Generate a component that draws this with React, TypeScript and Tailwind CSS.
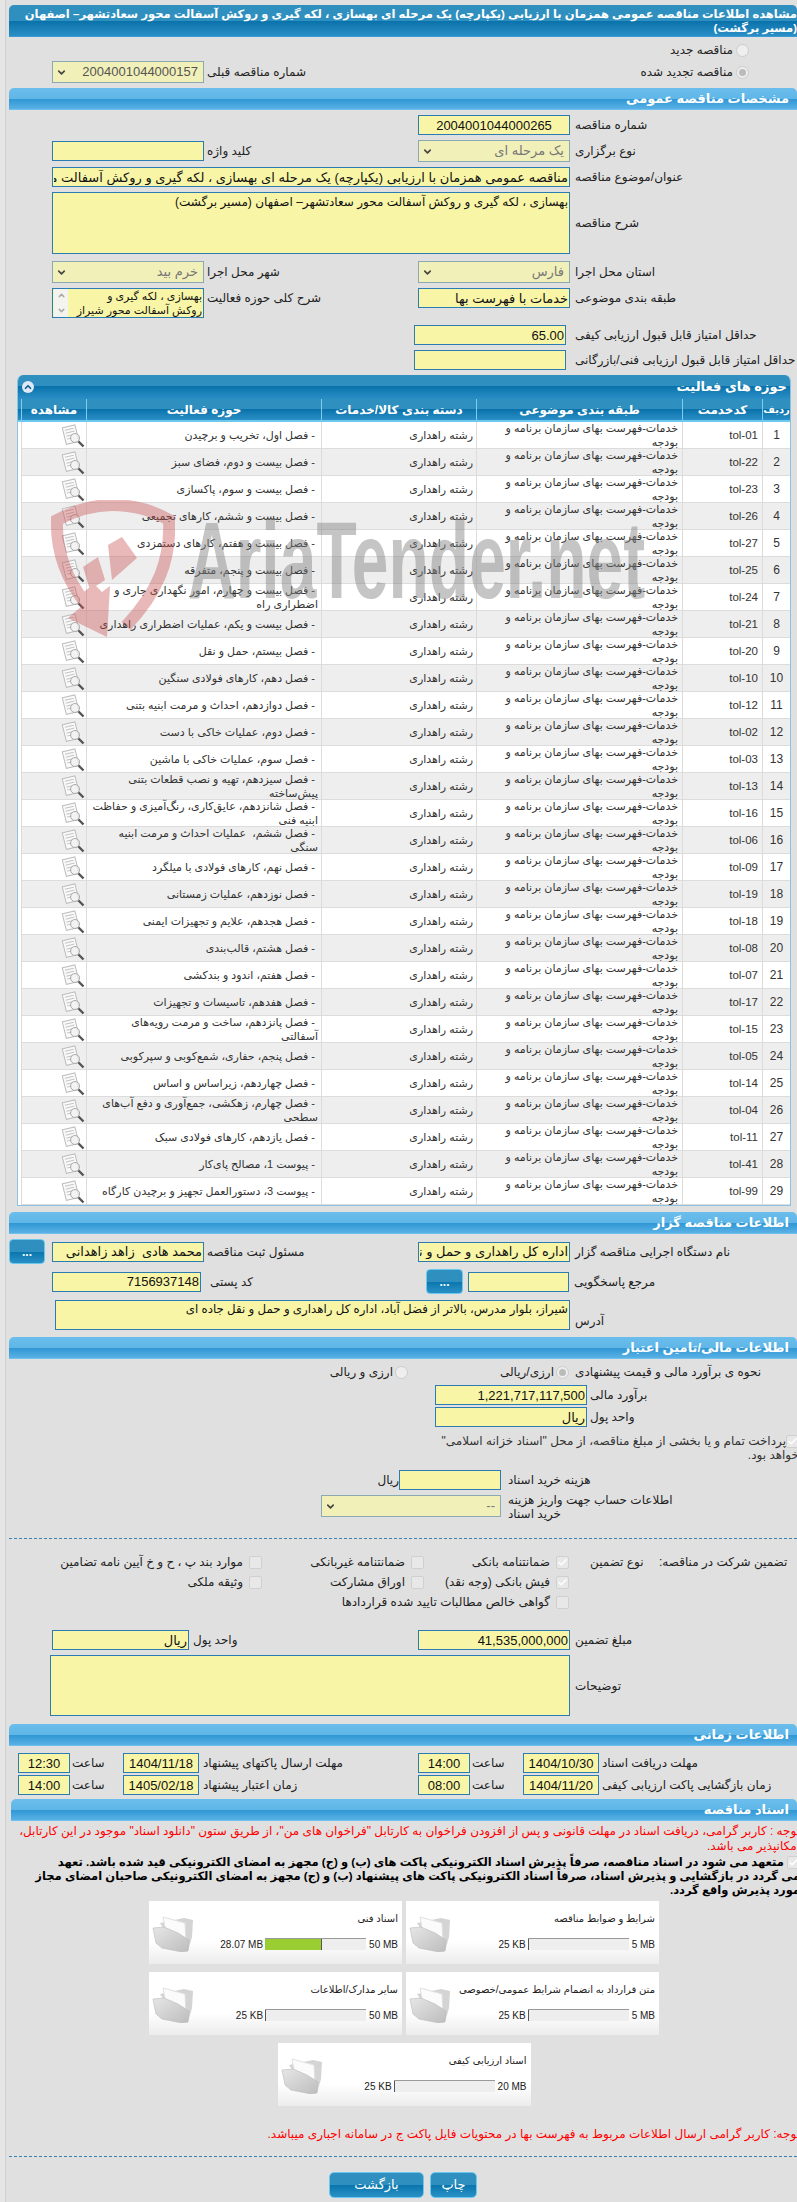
import React from 'react';
import { ChevronDown, ChevronUp, Check } from 'lucide-react';

const rows: [string, string][] = [
  ['tol-01', 'فصل اول، تخریب و برچیدن'],
  ['tol-22', 'فصل بیست و دوم، فضای سبز'],
  ['tol-23', 'فصل بیست و سوم، پاکسازی'],
  ['tol-26', 'فصل بیست و ششم، کارهای تجمیعی'],
  ['tol-27', 'فصل بیست و هفتم، کارهای دستمزدی'],
  ['tol-25', 'فصل بیست و پنجم، متفرقه'],
  ['tol-24', 'فصل بیست و چهارم، امور نگهداری جاری و\nاضطراری راه'],
  ['tol-21', 'فصل بیست و یکم، عملیات اضطراری راهداری'],
  ['tol-20', 'فصل بیستم، حمل و نقل'],
  ['tol-10', 'فصل دهم، کارهای فولادی سنگین'],
  ['tol-12', 'فصل دوازدهم، احداث و مرمت ابنیه بتنی'],
  ['tol-02', 'فصل دوم، عملیات خاکی با دست'],
  ['tol-03', 'فصل سوم، عملیات خاکی با ماشین'],
  ['tol-13', 'فصل سیزدهم، تهیه و نصب قطعات بتنی\nپیش‌ساخته'],
  ['tol-16', 'فصل شانزدهم، عایق‌کاری، رنگ‌آمیزی و حفاظت\nابنیه فنی'],
  ['tol-06', 'فصل ششم،  عملیات احداث و مرمت ابنیه\nسنگی'],
  ['tol-09', 'فصل نهم، کارهای فولادی با میلگرد'],
  ['tol-19', 'فصل نوزدهم، عملیات زمستانی'],
  ['tol-18', 'فصل هجدهم، علایم و تجهیزات ایمنی'],
  ['tol-08', 'فصل هشتم، قالب‌بندی'],
  ['tol-07', 'فصل هفتم، اندود و بندکشی'],
  ['tol-17', 'فصل هفدهم، تاسیسات و تجهیزات'],
  ['tol-15', 'فصل پانزدهم، ساخت و مرمت رویه‌های\nآسفالتی'],
  ['tol-05', 'فصل پنجم، حفاری، شمع‌کوبی و سپرکوبی'],
  ['tol-14', 'فصل چهاردهم، زیراساس و اساس'],
  ['tol-04', 'فصل چهارم، زهکشی، جمع‌آوری و دفع آب‌های\nسطحی'],
  ['tol-11', 'فصل یازدهم، کارهای فولادی سبک'],
  ['tol-41', 'پیوست 1، مصالح پای‌کار'],
  ['tol-99', 'پیوست 3، دستورالعمل تجهیز و برچیدن کارگاه'],
];

const docs = [
  { title: 'شرایط و ضوابط مناقصه', used: '25 KB', max: '5 MB', pct: 0.5 },
  { title: 'اسناد فنی', used: '28.07 MB', max: '50 MB', pct: 56 },
  { title: 'متن قرارداد به انضمام شرایط عمومی/خصوصی', used: '25 KB', max: '5 MB', pct: 0.5 },
  { title: 'سایر مدارک/اطلاعات', used: '25 KB', max: '50 MB', pct: 0.5 },
  { title: 'اسناد ارزیابی کیفی', used: '25 KB', max: '20 MB', pct: 0.5 },
];

const inputCls = 'box-border border border-[#2b7cb3] bg-[#f8f6a6] px-[1px] text-[#111] outline-none';
const labelCls = 'text-left text-[12px] text-[#222] whitespace-nowrap';

const Input = ({ className, value = '', ltr }: { className: string; value?: string; ltr?: boolean }) => (
  <input readOnly value={value} dir={ltr ? 'ltr' : 'rtl'} className={`${inputCls} text-[13px] ${className}`} />
);

const Label = ({ className = '', children }: { className?: string; children: React.ReactNode }) => (
  <div dir="rtl" className={`${labelCls} ${className}`}>{children}</div>
);

const Select = ({ className, value, digits }: { className: string; value: string; digits?: boolean }) => (
  <div dir="rtl" className={`box-border flex h-[22px] items-center justify-between border border-[#8aa9b0] bg-[#f1f0b9] px-[3px] text-[13px] ${digits ? 'text-[#555]' : 'text-[#777]'} ${className}`}>
    <span className="pr-[2px]">{value}</span>
    <ChevronDown size={11} strokeWidth={3.5} className="text-[#444]" />
  </div>
);

const Section = ({ title, className = '' }: { title: string; className?: string }) => (
  <div dir="rtl" className={`flex h-[22px] items-center rounded-t-[5px] border-b border-[#6fc0ec] bg-[linear-gradient(to_bottom,#6bbeec_0%,#5fb6e7_50%,#2f96d4_52%,#59b1e5_100%)] pr-[8px] text-[13px] font-bold text-white ${className}`}>
    {title}
  </div>
);

const Radio = ({ on }: { on?: boolean }) => (
  <span className="flex h-[13px] w-[13px] flex-none items-center justify-center rounded-full border border-[#ccc] bg-[#eee]">
    {on && <span className="h-[7px] w-[7px] rounded-full bg-[#bbb]" />}
  </span>
);

const Checkbox = ({ on }: { on?: boolean }) => (
  <span className="inline-flex h-[13px] w-[13px] flex-none items-center justify-center rounded-[2px] border border-[#d0d0d0] bg-[#e8e8e8] align-middle">
    {on && <Check size={11} strokeWidth={3} className="text-white" />}
  </span>
);

const CheckItem = ({ on, text }: { on?: boolean; text: string }) => (
  <div dir="rtl" className="flex items-center gap-[6px] whitespace-nowrap text-[12px] text-[#222]">
    <Checkbox on={on} />
    <span>{text}</span>
  </div>
);

const DotsButton = ({ className = '' }: { className?: string }) => (
  <button className={`h-[25px] w-[36px] flex-none rounded-[4px] border border-[#6cc7ec] bg-[linear-gradient(to_bottom,#2f90bf_0%,#2f90bf_50%,#0a76ad_52%,#2a91c6_100%)] text-[12px] font-bold leading-[20px] text-white ${className}`}>
    ...
  </button>
);

const DocIcon = () => (
  <svg width="24" height="24" viewBox="0 0 24 24">
    <g transform="rotate(-14 10 10)">
      <rect x="3" y="2" width="13" height="17" fill="#fafafa" stroke="#bbb" />
      <path d="M5 5h9M5 8h9M5 11h6M5 14h5" stroke="#c4c4c4" />
    </g>
    <circle cx="14" cy="14" r="4.5" fill="#f0f0f0" fillOpacity="0.7" stroke="#aaa" />
    <path d="M17.5 17.5L22.5 22.5" stroke="#555" strokeWidth="2.4" />
  </svg>
);

const FolderIcon = () => (
  <svg width="42" height="37" viewBox="0 0 42 37">
    <defs>
      <linearGradient id="fld" x1="0" y1="0" x2="1" y2="1">
        <stop offset="0" stopColor="#e6e6e6" />
        <stop offset="1" stopColor="#bdbdbd" />
      </linearGradient>
    </defs>
    <path d="M8 8L32 3L41 5L40 22L36 36L12 14Z" fill="#d4d4d4" />
    <path d="M11 2L33 8L34 26L14 18Z" fill="#fbfbfb" stroke="#e0e0e0" />
    <path d="M1 13L12 12L26 18L37 25L36 36L30 37L10 33L4 28Z" fill="url(#fld)" stroke="#bbb" strokeWidth="0.6" />
  </svg>
);

const DocCard = ({ title, used, max, pct }: { title: string; used: string; max: string; pct: number }) => (
  <div dir="ltr" className="flex h-[63px] w-[253px] bg-[linear-gradient(to_bottom,#ffffff_65%,#ececec_100%)]">
    <div className="ml-[3px] mt-[14px] flex-none">
      <FolderIcon />
    </div>
    <div className="flex min-w-0 flex-1 flex-col items-end pr-[4px]">
      <div dir="rtl" className="mt-[11px] h-[14px] whitespace-nowrap text-[10px] leading-[14px] text-[#222]">{title}</div>
      <div className="mt-[11px] flex h-[14px] items-center text-[10px] text-[#222]">
        <span className="whitespace-nowrap">{used}</span>
        <div className="ml-[2px] mr-[3px] h-[12px] w-[101px] flex-none border-t border-[#999] bg-[#eee]">
          <div className="h-full min-w-[1px] border-r border-[#555] bg-[#9acd32]" style={{ width: `${pct}%` }} />
        </div>
        <span className="whitespace-nowrap">{max}</span>
      </div>
    </div>
  </div>
);

export default function App() {
  return (
    <div className="relative flex h-[2202px] w-[797px] overflow-hidden bg-[#e0e0e0] font-['Liberation_Sans','DejaVu_Sans',sans-serif]">
      <div className="w-[6px] flex-none border-r border-[#cfcfcf] bg-[#e6e6e6]" />
      <div className="ml-[3px] mt-[5px] w-[788px] flex-none">
        {/* page title */}
        <div dir="rtl" className="h-[32px] whitespace-pre rounded-t-[5px] border-b border-[#3a9ad6] bg-[linear-gradient(to_bottom,#2f8fbe_0%,#2f8fbe_50%,#0a72ab_52%,#2b8fc6_100%)] pt-[2px] text-[11.5px] font-bold leading-[14px] text-white">
          {'مشاهده اطلاعات مناقصه عمومی همزمان با ارزیابی (یکپارچه) یک مرحله ای بهسازی ، لکه گیری و روکش آسفالت محور سعادتشهر– اصفهان\n(مسیر برگشت)'}
        </div>

        <div dir="rtl" className="mt-[3px] flex h-[20px] items-center gap-[3px] pr-[48px] text-[12px] text-[#222]">
          <Radio />
          <span>مناقصه جدید</span>
        </div>
        <div className="mt-[1px] flex h-[22px] items-center pl-[43px]">
          <Select className="w-[152px]" value="2004001044000157" digits />
          <Label className="ml-[3px]">شماره مناقصه قبلی</Label>
          <div dir="rtl" className="ml-auto flex items-center gap-[3px] pr-[48px] text-[12px] text-[#222]">
            <Radio on />
            <span>مناقصه تجدید شده</span>
          </div>
        </div>

        <Section title="مشخصات مناقصه عمومی" className="mt-[5px]" />

        <div className="mt-[5px] flex h-[20px] items-center pl-[409px]">
          <Input className="h-[20px] w-[152px] text-center" value="2004001044000265" ltr />
          <Label className="ml-[5px]">شماره مناقصه</Label>
        </div>
        <div className="mt-[5px] flex h-[22px] items-center pl-[43px]">
          <Input className="h-[20px] w-[152px]" />
          <Label className="ml-[3px] w-[211px]">کلید واژه</Label>
          <Select className="w-[152px]" value="یک مرحله ای" />
          <Label className="ml-[5px]">نوع برگزاری</Label>
        </div>
        <div className="mt-[5px] flex h-[20px] items-center pl-[43px]">
          <Input className="h-[20px] w-[518px]" value="مناقصه عمومی همزمان با ارزیابی (یکپارچه) یک مرحله ای بهسازی ، لکه گیری و روکش آسفالت محور سعادتشهر– اصفهان (مسیر برگشت)" />
          <Label className="ml-[5px]">عنوان/موضوع مناقصه</Label>
        </div>
        <div className="mt-[5px] flex h-[62px] items-center pl-[43px]">
          <textarea readOnly dir="rtl" className={`${inputCls} h-[62px] w-[518px] resize-none text-[12px]`} value="بهسازی ، لکه گیری و روکش آسفالت محور سعادتشهر– اصفهان (مسیر برگشت)" />
          <Label className="ml-[5px]">شرح مناقصه</Label>
        </div>
        <div className="mt-[7px] flex h-[22px] items-center pl-[43px]">
          <Select className="w-[152px]" value="خرم بید" />
          <Label className="ml-[3px] w-[211px]">شهر محل اجرا</Label>
          <Select className="w-[152px]" value="فارس" />
          <Label className="ml-[5px]">استان محل اجرا</Label>
        </div>
        <div className="mt-[5px] flex h-[30px] items-start pl-[43px]">
          <div dir="rtl" className={`${inputCls} flex h-[30px] w-[152px] overflow-hidden text-[11px] leading-[14px]`}>
            <span className="whitespace-pre">{'بهسازی ، لکه گیری و\nروکش آسفالت محور شیراز'}</span>
            <span className="mr-auto flex w-[14px] flex-none flex-col items-center justify-between bg-[#f4f4ee] py-[2px] text-[#aaa]">
              <ChevronUp size={9} strokeWidth={4} />
              <ChevronDown size={9} strokeWidth={4} />
            </span>
          </div>
          <Label className="ml-[3px] w-[211px] leading-[20px]">شرح کلی حوزه فعالیت</Label>
          <Input className="h-[20px] w-[152px]" value="خدمات با فهرست بها" />
          <Label className="ml-[5px] leading-[20px]">طبقه بندی موضوعی</Label>
        </div>
        <div className="mt-[7px] flex h-[20px] items-center pl-[405px]">
          <Input className="h-[20px] w-[152px] text-right" value="65.00" ltr />
          <Label className="ml-[9px]">حداقل امتیاز قابل قبول ارزیابی کیفی</Label>
        </div>
        <div className="mt-[5px] flex h-[20px] items-center pl-[405px]">
          <Input className="h-[20px] w-[152px]" />
          <Label className="ml-[9px]">حداقل امتیاز قابل قبول ارزیابی فنی/بازرگانی</Label>
        </div>

        {/* activity table */}
        <div className="ml-[8px] mt-[5px] w-[774px] overflow-hidden rounded-t-[6px] border-x border-b border-[#8cc3e3] bg-white">
          <div dir="rtl" className="flex h-[24px] items-center justify-between bg-[linear-gradient(to_bottom,#2f8fbe_0%,#2f8fbe_45%,#0a72ab_47%,#2b8fc6_100%)] pl-[4px] pr-[3px] text-[13px] font-bold text-white">
            <span>حوزه های فعالیت</span>
            <span className="flex h-[12px] w-[12px] items-center justify-center rounded-full bg-[#dfe9f5] text-[#0a5f90]">
              <ChevronUp size={10} strokeWidth={4} />
            </span>
          </div>
          <div dir="rtl" className="grid h-[23px] grid-cols-[28px_80px_206px_155px_235px_65px] items-stretch border-b-2 border-[#6fc9ef] bg-[linear-gradient(to_bottom,#2f8fbe_0%,#2f8fbe_48%,#0a72ab_50%,#2b8fc6_100%)] text-center text-[12px] font-bold text-white">
            <div className="flex items-center justify-center whitespace-nowrap border-l border-[#7ccdf0] text-[10px]">ردیف</div>
            {['کدخدمت', 'طبقه بندی موضوعی', 'دسته بندی کالا/خدمات', 'حوزه فعالیت', 'مشاهده'].map((h) => (
              <div key={h} className="flex items-center justify-center border-l border-[#7ccdf0]">{h}</div>
            ))}
          </div>
          {rows.map(([code, name], i) => (
            <div key={code} dir="rtl" className={`ml-[3px] grid h-[27px] grid-cols-[28px_80px_206px_155px_235px_65px] border-b border-[#dcdcdc] text-[11px] leading-[13.5px] text-[#333] ${i % 2 ? 'bg-[#eeeeee]' : 'bg-white'}`}>
              <div className="flex items-center justify-center border-l border-[#dcdcdc] text-[12px]">{i + 1}</div>
              <div dir="ltr" className="flex items-center justify-end border-l border-[#dcdcdc] pr-[4px] text-[11.5px]">{code}</div>
              <div className="flex items-center whitespace-pre border-l border-[#dcdcdc] pr-[4px]">{'خدمات-فهرست بهای سازمان برنامه و\nبودجه'}</div>
              <div className="flex items-center border-l border-[#dcdcdc] pr-[3px]">رشته راهداری</div>
              <div className="flex items-center whitespace-pre border-l border-[#dcdcdc] pr-[3px]">{'\u00a0- ' + name}</div>
              <div className="flex items-center justify-start border-l border-[#dcdcdc] pr-[1px]"><DocIcon /></div>
            </div>
          ))}
        </div>

        <Section title="اطلاعات مناقصه گزار" className="mt-[6px]" />
        <div className="mt-[5px] flex h-[25px] items-center">
          <DotsButton className="mr-[7px]" />
          <Input className="h-[20px] w-[152px]" value="محمد هادی  زاهد زاهدانی" />
          <Label className="ml-[3px] w-[211px]">مسئول ثبت مناقصه</Label>
          <Input className="h-[20px] w-[152px]" value="اداره کل راهداری و حمل و نقل جاده ای" />
          <Label className="ml-[5px]">نام دستگاه اجرایی مناقصه گزار</Label>
        </div>
        <div className="mt-[5px] flex h-[25px] items-center pl-[43px]">
          <Input className="h-[20px] w-[149px] text-right" value="7156937148" ltr />
          <Label className="ml-[9px] w-[216px]">کد پستی</Label>
          <DotsButton className="w-[37px]" />
          <Input className="ml-[5px] h-[20px] w-[101px]" />
          <Label className="ml-[5px]">مرجع پاسخگویی</Label>
        </div>
        <div className="mt-[6px] flex h-[30px] items-end pl-[46px]">
          <textarea readOnly dir="rtl" className={`${inputCls} h-[30px] w-[515px] resize-none text-[11.8px]`} value="شیراز، بلوار مدرس، بالاتر از فضل آباد، اداره کل راهداری و حمل و نقل جاده ای" />
          <Label className="ml-[5px]">آدرس</Label>
        </div>

        <Section title="اطلاعات مالی/تامین اعتبار" className="mt-[7px]" />
        <div className="mt-[3px] flex h-[20px] items-center pl-[324px]">
          <div dir="rtl" className="flex w-[75px] flex-none items-center gap-[2px] whitespace-nowrap text-[12px] text-[#222]"><Radio /><span>ارزی و ریالی</span></div>
          <div dir="rtl" className="ml-[94px] flex w-[67px] flex-none items-center gap-[2px] whitespace-nowrap text-[12px] text-[#222]"><Radio on /><span>ارزی/ریالی</span></div>
          <Label className="ml-[6px]">نحوه ی برآورد مالی و قیمت پیشنهادی</Label>
        </div>
        <div className="mt-[3px] flex h-[20px] items-center pl-[426px]">
          <Input className="h-[20px] w-[152px] text-right" value="1,221,717,117,500" ltr />
          <Label className="ml-[3px]">برآورد مالی</Label>
        </div>
        <div className="mt-[2px] flex h-[20px] items-center pl-[426px]">
          <Input className="h-[20px] w-[152px]" value="ریال" />
          <Label className="ml-[3px]">واحد پول</Label>
        </div>
        <div dir="rtl" className="ml-[412px] mr-[-2px] mt-[7px] h-[28px] whitespace-pre text-[12px] leading-[14px] text-[#333]">
          <Checkbox on />
          {'پرداخت تمام و یا بخشی از مبلغ مناقصه، از محل "اسناد خزانه اسلامی"\nخواهد بود.'}
        </div>
        <div className="mt-[8px] flex h-[20px] items-center pl-[371px]">
          <div dir="rtl" className="w-[19px] flex-none whitespace-nowrap text-[12px] text-[#222]">ریال</div>
          <Input className="h-[20px] w-[102px]" />
          <Label className="ml-[7px]">هزینه خرید اسناد</Label>
        </div>
        <div className="mt-[5px] flex h-[22px] items-start pl-[312px]">
          <Select className="w-[180px]" value="--" />
          <div dir="rtl" className="ml-[7px] mt-[-2px] whitespace-pre text-left text-[12px] leading-[14px] text-[#222]">{'اطلاعات حساب جهت واریز هزینه\nخرید اسناد'}</div>
        </div>

        <div className="mt-[21px] border-t border-dashed border-[#3b82b0]" />

        <div className="mt-[13px] flex items-start">
          <div className="grid w-[560px] flex-none grid-cols-[253px_162px_145px] [grid-auto-rows:20px] items-center">
            <CheckItem text="موارد بند پ ، ح و خ آیین نامه تضامین" />
            <CheckItem text="ضمانتنامه غیربانکی" />
            <CheckItem on text="ضمانتنامه بانکی" />
            <CheckItem text="وثیقه ملکی" />
            <CheckItem text="اوراق مشارکت" />
            <CheckItem on text="فیش بانکی (وجه نقد)" />
            <div />
            <div />
            <CheckItem text="گواهی خالص مطالبات تایید شده قراردادها" />
          </div>
          <Label className="ml-[21px] w-[69px] leading-[20px]">نوع تضمین</Label>
          <Label className="leading-[20px]">تضمین شرکت در مناقصه:</Label>
        </div>

        <div className="mt-[18px] flex h-[20px] items-center pl-[43px]">
          <Input className="h-[20px] w-[137px]" value="ریال" />
          <Label className="ml-[4px] w-[225px]">واحد پول</Label>
          <Input className="h-[20px] w-[152px] text-right" value="41,535,000,000" ltr />
          <Label className="ml-[5px]">مبلغ تضمین</Label>
        </div>
        <div className="mt-[5px] flex h-[61px] items-center pl-[41px]">
          <textarea readOnly dir="rtl" className={`${inputCls} h-[61px] w-[520px] resize-none text-[12px]`} />
          <Label className="ml-[5px]">توضیحات</Label>
        </div>

        <Section title="اطلاعات زمانی" className="mt-[8px]" />
        <div className="mt-[7px] flex h-[20px] items-center pl-[9px]">
          <Input className="h-[20px] w-[52px] text-center" value="12:30" ltr />
          <Label className="ml-[2px] w-[51px]">ساعت</Label>
          <Input className="h-[20px] w-[76px] text-center" value="1404/11/18" ltr />
          <Label className="ml-[4px] w-[215px]">مهلت ارسال پاکتهای پیشنهاد</Label>
          <Input className="h-[20px] w-[52px] text-center" value="14:00" ltr />
          <Label className="ml-[2px] w-[51px]">ساعت</Label>
          <Input className="h-[20px] w-[76px] text-center" value="1404/10/30" ltr />
          <Label className="ml-[3px]">مهلت دریافت اسناد</Label>
        </div>
        <div className="mt-[2px] flex h-[20px] items-center pl-[9px]">
          <Input className="h-[20px] w-[52px] text-center" value="14:00" ltr />
          <Label className="ml-[2px] w-[51px]">ساعت</Label>
          <Input className="h-[20px] w-[76px] text-center" value="1405/02/18" ltr />
          <Label className="ml-[4px] w-[215px]">زمان اعتبار پیشنهاد</Label>
          <Input className="h-[20px] w-[52px] text-center" value="08:00" ltr />
          <Label className="ml-[2px] w-[51px]">ساعت</Label>
          <Input className="h-[20px] w-[76px] text-center" value="1404/11/20" ltr />
          <Label className="ml-[3px]">زمان بازگشایی پاکت ارزیابی کیفی</Label>
        </div>

        <Section title="اسناد مناقصه" className="ml-[2px] mt-[4px]" />
        <div dir="rtl" className="mr-[-3px] mt-[3px] h-[30px] whitespace-pre text-[12px] leading-[15px] text-[#f00]">
          {'توجه : کاربر گرامی، دریافت اسناد در مهلت قانونی و پس از افزودن فراخوان به کارتابل "فراخوان های من"، از طریق ستون "دانلود اسناد" موجود در این کارتابل،\nامکانپذیر می باشد.'}
        </div>
        <div dir="rtl" className="mr-[-3px] mt-[1px] h-[42px] whitespace-pre text-[11.5px] font-bold leading-[14px] text-black">
          <Checkbox on />
          {' متعهد می شود در اسناد مناقصه، صرفاً پذیرش اسناد الکترونیکی پاکت های (ب) و (ج) مجهز به امضای الکترونیکی قید شده باشد. تعهد\nمی گردد در بازگشایی و پذیرش اسناد، صرفاً اسناد الکترونیکی پاکت های پیشنهاد (ب) و (ج) مجهز به امضای الکترونیکی صاحبان امضای مجاز\nمورد پذیرش واقع گردد.'}
        </div>

        <div dir="rtl" className="ml-[140px] mt-[4px] flex w-[510px] flex-wrap justify-center gap-x-[4px] gap-y-[8px]">
          {docs.map((d) => (
            <DocCard key={d.title} {...d} />
          ))}
        </div>

        <div dir="rtl" className="mr-[-3px] mt-[21px] h-[14px] whitespace-nowrap text-[12px] leading-[14px] text-[#f00]">
          توجه: کاربر گرامی ارسال اطلاعات مربوط به فهرست بها در محتویات فایل پاکت ج در سامانه اجباری میباشد.
        </div>

        <div className="mt-[15px] border-t border-dashed border-[#3b82b0]" />

        <div className="ml-[320px] mt-[15px] flex gap-[6px]">
          <button className="h-[26px] w-[95px] rounded-[5px] border border-[#6cc7ec] bg-[linear-gradient(to_bottom,#2f90bf_0%,#2f90bf_50%,#0a76ad_52%,#2a91c6_100%)] text-[13px] text-white">بازگشت</button>
          <button className="h-[26px] w-[47px] rounded-[5px] border border-[#6cc7ec] bg-[linear-gradient(to_bottom,#2f90bf_0%,#2f90bf_50%,#0a76ad_52%,#2a91c6_100%)] text-[13px] text-white">چاپ</button>
        </div>
      </div>

      {/* watermark */}
      <svg width="125" height="137" viewBox="0 0 125 137" className="pointer-events-none absolute left-[50px] top-[500px] opacity-40">
        <path d="M36 104C14 76 6 48 7 20C28 9 44 5 62 5C82 5 102 10 119 20C121 60 108 92 76 126" fill="none" stroke="#c94f4f" strokeWidth="12" />
        <path d="M57 137L18 118L32 106L26 98L44 84L52 92L60 86Z" fill="#c94f4f" />
        <path d="M33 67L48 57L55 80L40 90ZM58 45L72 37L87 58L62 80Z" fill="#c94f4f" />
      </svg>
      <div className="pointer-events-none absolute left-[188px] top-[505px] origin-left scale-x-[0.6] whitespace-nowrap text-[110px] font-bold leading-[110px] text-[#808080] opacity-45">
        AriaTender.net
      </div>
    </div>
  );
}
